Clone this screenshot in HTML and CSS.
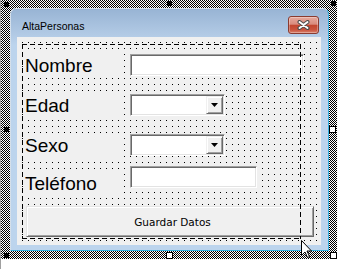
FILE: index.html
```
<!DOCTYPE html>
<html>
<head>
<meta charset="utf-8">
<link rel="stylesheet" href="styles.css">
</head>
<body>
<div class="stage">
  <div class="selection">
    <div class="window">
      <div class="titlebar">
        <span class="title">AltaPersonas</span>
        <div class="close">
          <svg width="13" height="10" viewBox="0 0 13 10">
            <path d="M2.5 2 L10.5 8 M10.5 2 L2.5 8" stroke="#4a4a4a" stroke-width="4" stroke-linecap="round"/>
            <path d="M2.5 2 L10.5 8 M10.5 2 L2.5 8" stroke="#ffffff" stroke-width="2" stroke-linecap="round"/>
          </svg>
        </div>
      </div>
      <div class="client">
        <div class="row r1">
          <span class="label">Nombre</span>
          <div class="textbox tb-nombre"></div>
        </div>
        <div class="row r2">
          <span class="label">Edad</span>
          <div class="combo"><span class="drop"><svg width="7" height="4" viewBox="0 0 7 4"><polygon points="0,0 7,0 3.5,4" fill="#000"/></svg></span></div>
        </div>
        <div class="row r3">
          <span class="label">Sexo</span>
          <div class="combo"><span class="drop"><svg width="7" height="4" viewBox="0 0 7 4"><polygon points="0,0 7,0 3.5,4" fill="#000"/></svg></span></div>
        </div>
        <div class="row r4">
          <span class="label label-tel">Teléfono</span>
          <div class="textbox tb-tel"></div>
        </div>
        <div class="cmd">Guardar Datos</div>
      </div>
    </div>
  </div>
  <div class="rubber"></div>
  <span class="handle h-tl"></span>
  <span class="handle h-tm"></span>
  <span class="handle h-tr"></span>
  <span class="handle h-ml"></span>
  <span class="handle h-bl"></span>
  <span class="handle open h-mr"></span>
  <span class="handle open h-bm"></span>
  <span class="handle open h-br"></span>
  <svg class="cursor" width="12" height="19" viewBox="0 0 12 19">
    <path d="M0.5 0.5 V15.5 L4 12 L6.5 17.5 L8.5 16.5 L6 11 H10.5 Z" fill="#fff" stroke="#000" stroke-width="1" stroke-linejoin="miter"/>
  </svg>
</div>
</body>
</html>
```
FILE: styles.css
```
body {
  margin: 0;
  background: #fff;
}

.stage {
  position: relative;
  width: 347px;
  height: 269px;
  overflow: hidden;
  background: linear-gradient(to right, #a0a0a0 1px, #fff 1px);
}

.selection {
  margin-left: 1px;
  width: 336px;
  height: 259px;
  box-sizing: border-box;
  padding: 8px 8px 8px 9px;
  background: repeating-conic-gradient(#000 0 25%, #fff 0 50%) 0 0 / 2px 2px;
}

.window {
  width: 319px;
  height: 243px;
  box-sizing: border-box;
  border: 1px solid;
  border-color: #d4dfea #36b0df #36b0df #d4dfea;
  border-radius: 6px 6px 0 0;
  background: linear-gradient(#98b4d4 0, #b2cae5 26px, #bcd4ed 36px, #bcd4ed 100%);
  display: flex;
  flex-direction: column;
}

.titlebar {
  flex: none;
  height: 28px;
  display: flex;
  justify-content: space-between;
  align-items: flex-start;
}

.title {
  margin: 11px 0 0 11px;
  font: 10.5px/12px "Liberation Sans", Arial, sans-serif;
  color: #000;
}

.close {
  width: 31px;
  height: 18px;
  margin: 7px 9px 0 0;
  box-sizing: border-box;
  border: 1px solid #8a3b30;
  border-radius: 3px;
  background: linear-gradient(#e6aa9e 0, #d98b7d 45%, #c2462f 52%, #c9543d 80%, #d9806c 100%);
  box-shadow: inset 0 0 0 1px rgba(255, 255, 255, 0.3);
  display: flex;
  align-items: center;
  justify-content: center;
}

.close svg {
  display: block;
}

.client {
  flex: 1;
  margin: 0 7px 5px 6px;
  padding: 17px 0 0 6px;
  box-sizing: border-box;
  display: flex;
  flex-direction: column;
  background-color: #f0f0f0;
  background-image: radial-gradient(circle at 0.5px 0.5px, #000 0.6px, transparent 0.7px);
  background-size: 6px 6px;
  background-position: 5px 5px;
}

.row {
  display: flex;
  align-items: flex-start;
  gap: 7px;
}

.r2,
.r3 {
  margin-top: 16px;
}

.r4 {
  margin-top: 8px;
}

.label {
  flex: none;
  width: 100px;
  height: 24px;
  box-sizing: border-box;
  padding-left: 2px;
  background: #f0f0f0;
  font: 19px/24px "Liberation Sans", Arial, sans-serif;
  color: #000;
}

.label-tel {
  margin-top: 6px;
}

.textbox,
.combo {
  flex: none;
  height: 22px;
  box-sizing: border-box;
  background: #fff;
  border: 1px solid;
  border-color: #a0a0a0 #fff #fff #a0a0a0;
  box-shadow: inset 1px 1px #696969, inset -1px -1px #e3e3e3;
}

.tb-nombre {
  width: 174px;
}

.tb-tel {
  width: 127px;
}

.combo {
  width: 95px;
  display: flex;
  justify-content: flex-end;
  padding: 1px;
}

.drop {
  width: 17px;
  height: 18px;
  box-sizing: border-box;
  background: #f0f0f0;
  border: 1px solid;
  border-color: #f0f0f0 #696969 #696969 #f0f0f0;
  box-shadow: inset 1px 1px #fff, inset -1px -1px #a0a0a0;
  display: flex;
  align-items: center;
  justify-content: center;
}

.drop svg {
  display: block;
}

.cmd {
  margin: 10px 0 0 3px;
  width: 288px;
  height: 31px;
  box-sizing: border-box;
  background: #f0f0f0;
  border: 1px solid;
  border-color: #e3e3e3 #696969 #696969 #e3e3e3;
  box-shadow: inset 1px 1px #fff, inset -1px -1px #a0a0a0;
  display: flex;
  align-items: center;
  justify-content: center;
  padding-left: 5px;
  font: 10.5px "DejaVu Sans", Verdana, sans-serif;
  color: #000;
}

.rubber {
  position: absolute;
  left: 22px;
  top: 44px;
  width: 279px;
  height: 195px;
  background:
    repeating-linear-gradient(90deg, #000 0 5px, transparent 5px 8px) left top / 100% 1px no-repeat,
    repeating-linear-gradient(90deg, #000 0 5px, transparent 5px 8px) left bottom / 100% 1px no-repeat,
    repeating-linear-gradient(180deg, #000 0 5px, transparent 5px 8px) left top / 1px 100% no-repeat,
    repeating-linear-gradient(180deg, #000 0 5px, transparent 5px 8px) right top / 1px 100% no-repeat;
}

.handle {
  position: absolute;
  width: 5px;
  height: 5px;
  background: #000;
}

.handle.open {
  width: 7px;
  height: 7px;
  box-sizing: border-box;
  background: #fff;
  border: 1px solid #000;
}

.h-tl { left: 4px; top: 2px; }
.h-tm { left: 167px; top: 1px; }
.h-tr { left: 331px; top: 1px; }
.h-ml { left: 4px; top: 127px; }
.h-bl { left: 4px; top: 253px; }
.h-mr { left: 329px; top: 126px; }
.h-bm { left: 166px; top: 252px; }
.h-br { left: 330px; top: 252px; }

.cursor {
  position: absolute;
  left: 301px;
  top: 240px;
  display: block;
}
```
